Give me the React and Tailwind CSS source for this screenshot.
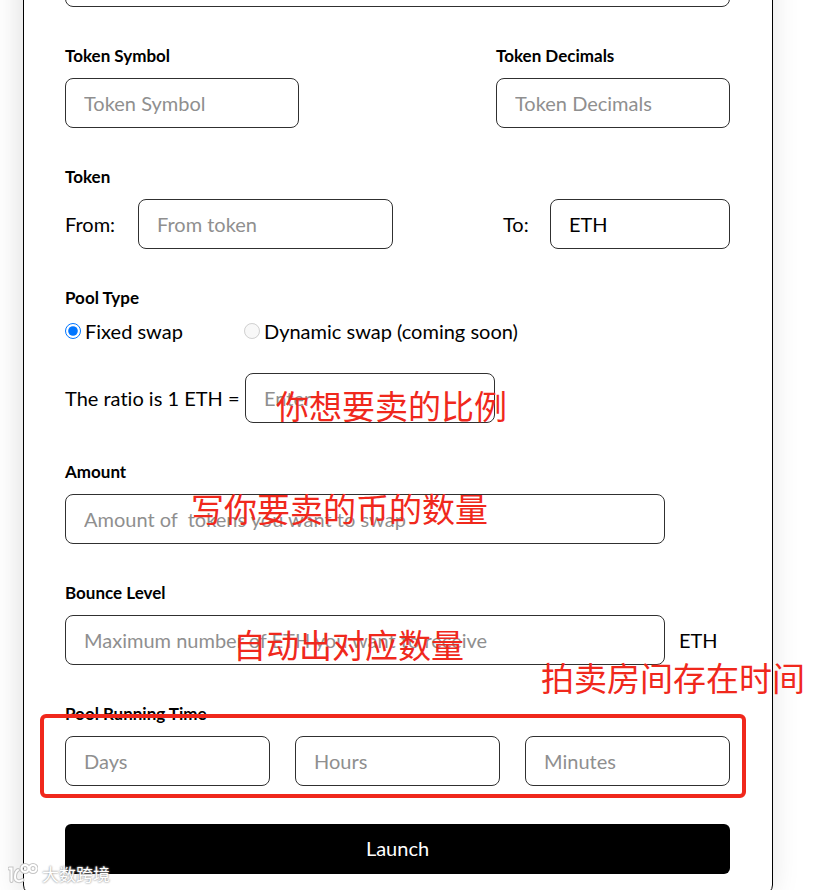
import { useState } from 'react'

const fieldClass =
  'h-[50px] min-w-0 rounded-lg border border-[#303030] bg-white px-[18px] text-xl text-black placeholder:text-[#8f8f8f] outline-none'

const labelClass = 'block text-[17px] leading-6 font-bold'

const noteClass =
  "pointer-events-none absolute whitespace-nowrap font-['Noto_Sans_CJK_SC',sans-serif] text-[33px] leading-10 text-[#f0281c]"

const Watermark = () => (
  <div className="pointer-events-none absolute bottom-1 left-2 flex items-center gap-1">
    <svg width="30" height="24" viewBox="0 0 30 24" fill="none">
      <g stroke="#c4c4c4" strokeWidth="4" strokeLinecap="round">
        <path d="M1.5 6.5H3.5V19" />
        <path d="M10 8C7.5 9.5 7 12.5 7 15C7 19 11 20.5 14.5 18" />
        <circle cx="17" cy="6.5" r="3.5" />
        <circle cx="25" cy="6.5" r="3.5" />
      </g>
      <g stroke="#fff" strokeWidth="2" strokeLinecap="round">
        <path d="M1.5 6.5H3.5V19" />
        <path d="M10 8C7.5 9.5 7 12.5 7 15C7 19 11 20.5 14.5 18" />
        <circle cx="17" cy="6.5" r="3.5" />
        <circle cx="25" cy="6.5" r="3.5" />
      </g>
    </svg>
    <span className="font-['Noto_Sans_CJK_SC',sans-serif] text-[17px] leading-6 text-white [text-shadow:0_0_2px_#999,0_0_2px_#aaa]">
      大数跨境
    </span>
  </div>
)

const App = () => {
  const [poolType, setPoolType] = useState('fixed')

  return (
    <div className="relative h-screen overflow-hidden bg-white font-['Lato',sans-serif] text-xl leading-6 text-black [font-variant-ligatures:none]">
      <main className="-mt-[100px] mr-[55px] ml-[23px] rounded-[10px] border border-black bg-white pt-[56px] pr-[42px] pb-5 pl-[41px] shadow-[-3px_0_30px_rgba(0,0,0,0.13)]">
        <form onSubmit={(e) => e.preventDefault()}>
          <div className="flex flex-col gap-[37px]">
            <input
              aria-label="Token name"
              className={`${fieldClass} w-full`}
            />

            <div className="flex justify-between">
              <div className="w-[234px]">
                <label htmlFor="symbol" className={labelClass}>
                  Token Symbol
                </label>
                <input
                  id="symbol"
                  placeholder="Token Symbol"
                  className={`${fieldClass} mt-2.5 block w-full`}
                />
              </div>
              <div className="w-[234px]">
                <label htmlFor="decimals" className={labelClass}>
                  Token Decimals
                </label>
                <input
                  id="decimals"
                  placeholder="Token Decimals"
                  className={`${fieldClass} mt-2.5 block w-full`}
                />
              </div>
            </div>

            <section>
              <h2 className={labelClass}>Token</h2>
              <div className="mt-2.5 flex items-center justify-between">
                <div className="flex items-center">
                  <label htmlFor="from" className="w-[73px]">
                    From:
                  </label>
                  <input
                    id="from"
                    placeholder="From token"
                    className={`${fieldClass} w-[255px]`}
                  />
                </div>
                <div className="flex items-center">
                  <label htmlFor="to" className="w-[47px]">
                    To:
                  </label>
                  <input
                    id="to"
                    defaultValue="ETH"
                    className={`${fieldClass} w-[180px]`}
                  />
                </div>
              </div>
            </section>

            <section>
              <h2 className={labelClass}>Pool Type</h2>
              <div className="mt-[9px] flex">
                <label className="flex w-[179px] items-center gap-1">
                  <input
                    type="radio"
                    name="poolType"
                    checked={poolType === 'fixed'}
                    onChange={() => setPoolType('fixed')}
                    className="size-4"
                  />
                  Fixed swap
                </label>
                <label className="flex items-center gap-1">
                  <input
                    type="radio"
                    name="poolType"
                    disabled
                    className="size-4"
                  />
                  Dynamic swap (coming soon)
                </label>
              </div>
              <div className="relative mt-[30px] flex items-center">
                <label htmlFor="ratio" className="w-[180px]">
                  The ratio is 1 ETH =
                </label>
                <input
                  id="ratio"
                  placeholder="Enter"
                  className={`${fieldClass} w-[250px]`}
                />
                <span className={`${noteClass} top-3 left-[211px]`}>
                  你想要卖的比例
                </span>
              </div>
            </section>

            <div className="relative">
              <label htmlFor="amount" className={labelClass}>
                Amount
              </label>
              <input
                id="amount"
                placeholder="Amount of  tokens you want to swap"
                className={`${fieldClass} mt-2.5 block w-[600px]`}
              />
              <span className={`${noteClass} top-7 left-[126px]`}>
                写你要卖的币的数量
              </span>
            </div>

            <div className="relative">
              <label htmlFor="level" className={labelClass}>
                Bounce Level
              </label>
              <div className="mt-2.5 flex items-center gap-3.5">
                <input
                  id="level"
                  placeholder="Maximum number of ETH you want to receive"
                  className={`${fieldClass} w-[600px]`}
                />
                <span>ETH</span>
              </div>
              <span className={`${noteClass} top-[43px] left-[168px]`}>
                自动出对应数量
              </span>
              <span className={`${noteClass} top-[76px] left-[476px]`}>
                拍卖房间存在时间
              </span>
            </div>

            <section className="relative">
              <h2 className={labelClass}>Pool Running Time</h2>
              <div className="mt-2.5 grid grid-cols-3 gap-[25px]">
                <input
                  aria-label="Days"
                  placeholder="Days"
                  className={fieldClass}
                />
                <input
                  aria-label="Hours"
                  placeholder="Hours"
                  className={fieldClass}
                />
                <input
                  aria-label="Minutes"
                  placeholder="Minutes"
                  className={fieldClass}
                />
              </div>
              <div className="pointer-events-none absolute top-3 -right-4 -bottom-3 -left-[25px] rounded-md border-4 border-[#f0281c]" />
            </section>
          </div>

          <button
            type="submit"
            className="mt-[38px] h-[50px] w-full rounded-md bg-black pb-0.5 text-white"
          >
            Launch
          </button>
        </form>
      </main>
      <Watermark />
    </div>
  )
}

export default App
